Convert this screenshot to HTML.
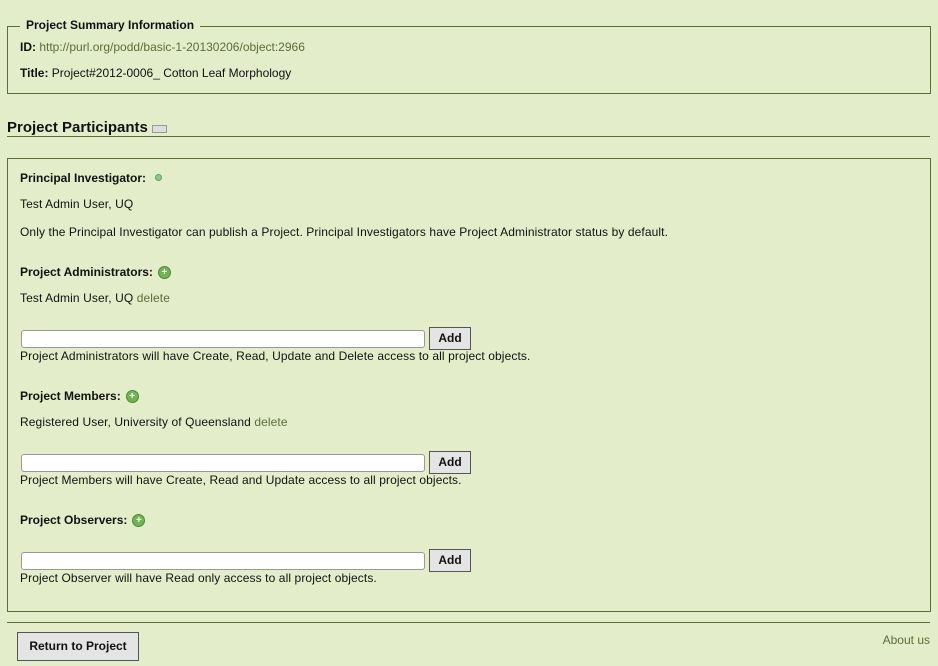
<!DOCTYPE html>
<html><head><style>
body{margin:0;background:#e3edca;font-family:"Liberation Sans",sans-serif;font-size:12px;color:#111;width:938px;height:666px;position:relative;overflow:hidden}
.a{position:absolute;white-space:nowrap}
.t{letter-spacing:0.1px}
b{font-weight:bold}
.l{color:#5b6e36}
.box{position:absolute;border:1px solid #5a6e36}
.hr{position:absolute;height:1px;background:#5a6e36;left:7px;width:923px}
.inp{position:absolute;left:21px;width:402px;height:16px;border:1px solid #999;border-radius:3px;background:#fff}
.btn{position:absolute;left:429px;width:40px;height:21px;border:1px solid #555;background:#e4e4e4;font-weight:bold;text-align:center;line-height:21px;font-size:12px}
.plus{display:inline-block;width:11px;height:11px;border-radius:50%;background:#6fb552;border:1px solid #4d8a36;color:#fff;font-size:10px;line-height:11px;text-align:center;vertical-align:1px;margin-left:5px;font-weight:bold}
</style></head><body>
<div class="box" style="left:7px;top:26px;width:922px;height:66px"></div>
<div class="a" style="left:20px;top:18px;background:#e3edca;padding:0 6px;font-weight:bold">Project Summary Information</div>
<div class="a" style="left:20px;top:40px"><b>ID:</b> <span class="l">http://purl.org/podd/basic-1-20130206/object:2966</span></div>
<div class="a" style="left:20px;top:66px"><b>Title:</b> Project#2012-0006_ Cotton Leaf Morphology</div>
<div class="a" style="left:7px;top:119px;font-size:15px;font-weight:bold">Project Participants <span style="display:inline-block;width:13px;height:6px;border:1px solid #999;background:#ddd;vertical-align:-1px"></span></div>
<div class="hr" style="top:136px"></div>
<div class="box" style="left:7px;top:158px;width:922px;height:452px"></div>
<div class="a" style="left:20px;top:171px"><b>Principal Investigator:</b> <span style="display:inline-block;width:5px;height:5px;border-radius:50%;background:#8c8;border:1px solid #5a5;margin-left:6px;vertical-align:1px"></span></div>
<div class="a t" style="left:20px;top:197px">Test Admin User, UQ</div>
<div class="a t" style="left:20px;top:225px">Only the Principal Investigator can publish a Project. Principal Investigators have Project Administrator status by default.</div>
<div class="a" style="left:20px;top:265px"><b>Project Administrators:</b><span class="plus">+</span></div>
<div class="a t" style="left:20px;top:291px">Test Admin User, UQ <span class="l">delete</span></div>
<div class="inp" style="top:330px"></div><div class="btn" style="top:327px">Add</div>
<div class="a t" style="left:20px;top:349px">Project Administrators will have Create, Read, Update and Delete access to all project objects.</div>
<div class="a" style="left:20px;top:389px"><b>Project Members:</b><span class="plus">+</span></div>
<div class="a t" style="left:20px;top:415px">Registered User, University of Queensland <span class="l">delete</span></div>
<div class="inp" style="top:454px"></div><div class="btn" style="top:451px">Add</div>
<div class="a t" style="left:20px;top:473px">Project Members will have Create, Read and Update access to all project objects.</div>
<div class="a" style="left:20px;top:513px"><b>Project Observers:</b><span class="plus">+</span></div>
<div class="inp" style="top:552px"></div><div class="btn" style="top:549px">Add</div>
<div class="a t" style="left:20px;top:571px">Project Observer will have Read only access to all project objects.</div>
<div class="hr" style="top:622px"></div>
<div class="a" style="left:17px;top:632px;width:120px;height:27px;border:1px solid #555;background:#e4e4e4;font-weight:bold;text-align:center;line-height:27px">Return to Project</div>
<div class="a l" style="right:8px;top:633px">About us</div>
</body></html>
